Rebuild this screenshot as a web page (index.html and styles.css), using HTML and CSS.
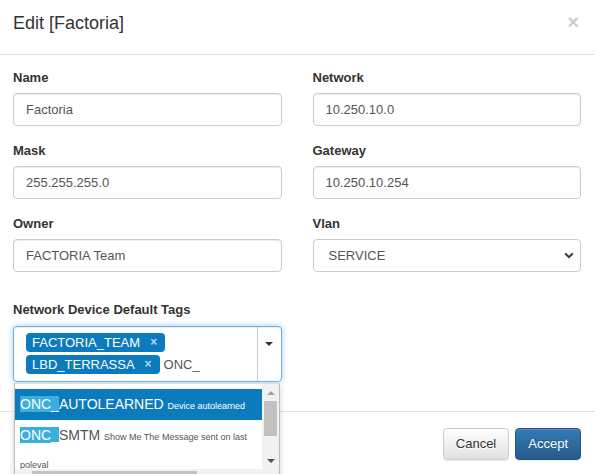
FILE: index.html
```html
<!DOCTYPE html>
<html lang="en">
<head>
<meta charset="utf-8">
<title>Edit [Factoria]</title>
<link rel="stylesheet" href="styles.css">
</head>
<body>
<div class="modal">
  <div class="modal-header">
    <h4 class="modal-title">Edit [Factoria]</h4>
    <span class="close">×</span>
  </div>
  <div class="modal-body">
    <div class="form-grid">
      <div class="form-group">
        <label class="label">Name</label>
        <div class="input">Factoria</div>
      </div>
      <div class="form-group">
        <label class="label">Network</label>
        <div class="input">10.250.10.0</div>
      </div>
      <div class="form-group">
        <label class="label">Mask</label>
        <div class="input">255.255.255.0</div>
      </div>
      <div class="form-group">
        <label class="label">Gateway</label>
        <div class="input">10.250.10.254</div>
      </div>
      <div class="form-group">
        <label class="label">Owner</label>
        <div class="input">FACTORIA Team</div>
      </div>
      <div class="form-group">
        <label class="label">Vlan</label>
        <div class="input select">
          <span class="select-text">SERVICE</span>
          <svg class="chevron" width="10" height="7" viewBox="0 0 10 7"><path d="M1.2 1.4 L5 5.2 L8.8 1.4" fill="none" stroke="#333" stroke-width="2"/></svg>
        </div>
      </div>
      <div class="form-group tags-group">
        <label class="label">Network Device Default Tags</label>
        <div class="tagbox">
          <div class="tag-list">
            <span class="tag">FACTORIA_TEAM<span class="tag-x">×</span></span>
            <span class="tag">LBD_TERRASSA<span class="tag-x">×</span></span>
            <span class="tag-input">ONC_</span>
          </div>
          <div class="tag-arrow"><span class="caret"></span></div>
        </div>
      </div>
    </div>
  </div>
  <div class="modal-footer">
    <button class="btn btn-default">Cancel</button>
    <button class="btn btn-primary">Accept</button>
  </div>

  <div class="dropdown">
    <div class="dropdown-main">
      <ul class="results">
        <li class="result active"><span class="match">ONC_</span>AUTOLEARNED <small class="desc">Device autolearned</small></li>
        <li class="result"><span class="match">ONC_</span>SMTM <small class="desc">Show Me The Message sent on last poleval</small></li>
      </ul>
      <div class="vscroll">
        <div class="sb-btn"><span class="tri-up"></span></div>
        <div class="sb-track"><div class="sb-thumb"></div></div>
        <div class="sb-btn"><span class="tri-down"></span></div>
      </div>
    </div>
    <div class="hscroll">
      <div class="hs-btn"></div>
      <div class="hs-track"><div class="hs-thumb"></div></div>
    </div>
  </div>
</div>
</body>
</html>
```

FILE: styles.css
```css
html, body {
  margin: 0;
  padding: 0;
  overflow: hidden;
  background: #fff;
}

body {
  font-family: "Liberation Sans", Arial, Helvetica, sans-serif;
  color: #333;
  font-size: 13px;
}

.modal {
  position: relative;
  width: 595px;
  height: 474px;
  background: #fff;
}

/* Header */
.modal-header {
  display: flex;
  align-items: flex-start;
  padding: 0 16px 0 13px;
  border-bottom: 1px solid #e5e5e5;
  box-sizing: border-box;
  height: 55px;
}

.modal-title {
  margin: 11px 0 0;
  font-size: 18px;
  font-weight: normal;
  line-height: 24px;
  color: #333;
}

.close {
  margin-left: auto;
  margin-top: 12px;
  font-size: 20px;
  font-weight: bold;
  line-height: 1;
  color: #000;
  opacity: 0.2;
}

/* Body */
.modal-body {
  padding: 14px 14px 13px 13px;
}

.form-grid {
  display: grid;
  grid-template-columns: 1fr 1fr;
  column-gap: 31px;
}

.form-group {
  margin-bottom: 16px;
}

.label {
  display: block;
  font-weight: bold;
  font-size: 13px;
  line-height: 18px;
  margin-bottom: 6px;
  color: #333;
}

.input {
  height: 33px;
  box-sizing: border-box;
  border: 1px solid #ccc;
  border-radius: 4px;
  padding: 0 12px;
  font-size: 13px;
  line-height: 31px;
  color: #555;
  box-shadow: inset 0 1px 1px rgba(0, 0, 0, 0.075);
}

.select {
  display: flex;
  align-items: center;
  padding: 0 6px 0 15px;
  box-shadow: none;
}

.select-text {
  flex: 1;
}

.chevron {
  display: block;
}

/* Tags */
.tags-group {
  margin-top: 13px;
}

.tags-group .label {
  margin-bottom: 7px;
}

.tagbox {
  display: flex;
  height: 56px;
  box-sizing: border-box;
  border: 1px solid #66afe9;
  border-radius: 4px;
  box-shadow: inset 0 1px 1px rgba(0, 0, 0, 0.075), 0 0 6px rgba(102, 175, 233, 0.6);
  background: #fff;
}

.tag-list {
  flex: 1;
  display: flex;
  flex-wrap: wrap;
  align-items: center;
  align-content: flex-start;
  row-gap: 3px;
  padding: 6px 6px 0 12px;
}

.tag {
  display: inline-flex;
  align-items: center;
  height: 19px;
  padding: 0 8px 0 6px;
  background: #0c7bbe;
  color: #fff;
  border-radius: 4px;
  font-size: 13px;
  line-height: 19px;
}

.tag-x {
  margin-left: 10px;
  font-size: 12px;
  font-weight: bold;
  color: rgba(255, 255, 255, 0.72);
}

.tag-input {
  margin-left: 4px;
  font-size: 13px;
  line-height: 19px;
  color: #555;
}

.tag-arrow {
  width: 24px;
  border-left: 1px solid #ccc;
  display: flex;
  justify-content: center;
  padding-top: 15px;
  box-sizing: border-box;
}

.caret {
  width: 0;
  height: 0;
  border-left: 4px solid transparent;
  border-right: 4px solid transparent;
  border-top: 4px solid #333;
}

/* Footer */
.modal-footer {
  display: flex;
  justify-content: flex-end;
  gap: 6px;
  padding: 16px 14px 0;
  border-top: 1px solid #e5e5e5;
}

.btn {
  height: 32px;
  padding: 0 12px;
  font-family: "Liberation Sans", Arial, sans-serif;
  font-size: 13px;
  line-height: 30px;
  border-radius: 4px;
  border: 1px solid #ccc;
  cursor: pointer;
}

.btn-default {
  color: #333;
  background: linear-gradient(to bottom, #fff 0%, #e0e0e0 100%);
  border-color: #ccc;
  text-shadow: 0 1px 0 #fff;
  box-shadow: inset 0 1px 0 rgba(255, 255, 255, 0.15), 0 1px 1px rgba(0, 0, 0, 0.075);
}

.btn-primary {
  color: #fff;
  background: linear-gradient(to bottom, #337ab7 0%, #265a88 100%);
  border-color: #245580;
  text-shadow: 0 -1px 0 rgba(0, 0, 0, 0.2);
  box-shadow: inset 0 1px 0 rgba(255, 255, 255, 0.15), 0 1px 1px rgba(0, 0, 0, 0.075);
}

/* Dropdown (overlay) */
.dropdown {
  position: absolute;
  left: 14px;
  top: 383px;
  width: 266px;
  height: 110px;
  background: #fff;
  border: 1px solid #bbb;
  border-top: 1px solid #ddd;
  border-radius: 0 0 4px 4px;
  box-shadow: 0 4px 6px rgba(0, 0, 0, 0.18);
  box-sizing: border-box;
  display: flex;
  flex-direction: column;
}

.dropdown-main {
  display: flex;
  height: 85px;
}

.results {
  flex: 1;
  margin: 0;
  padding: 5px 0 0;
  list-style: none;
  overflow: hidden;
}

.result {
  padding: 1px 5px 2px;
  font-size: 14px;
  line-height: 28px;
  color: #555;
}

.result.active {
  background: #0c7bbe;
  color: #fff;
}

.match {
  background: #3aafdb;
  color: #fff;
}

.desc {
  font-size: 9px;
  line-height: 1;
}

.vscroll {
  width: 17px;
  background: #f1f1f1;
  display: flex;
  flex-direction: column;
}

.sb-btn {
  height: 17px;
  display: flex;
  align-items: center;
  justify-content: center;
}

.tri-up {
  width: 0;
  height: 0;
  border-left: 4px solid transparent;
  border-right: 4px solid transparent;
  border-bottom: 4px solid #a3a3a3;
}

.tri-down {
  width: 0;
  height: 0;
  border-left: 4px solid transparent;
  border-right: 4px solid transparent;
  border-top: 4px solid #505050;
}

.sb-track {
  flex: 1;
  padding: 0 2px;
}

.sb-thumb {
  height: 35px;
  background: #c1c1c1;
}

.hscroll {
  display: flex;
  height: 17px;
  background: #f1f1f1;
}

.hs-btn {
  width: 17px;
}

.hs-track {
  flex: 1;
  padding-top: 2px;
}

.hs-thumb {
  width: 165px;
  height: 13px;
  background: #c1c1c1;
}
```
